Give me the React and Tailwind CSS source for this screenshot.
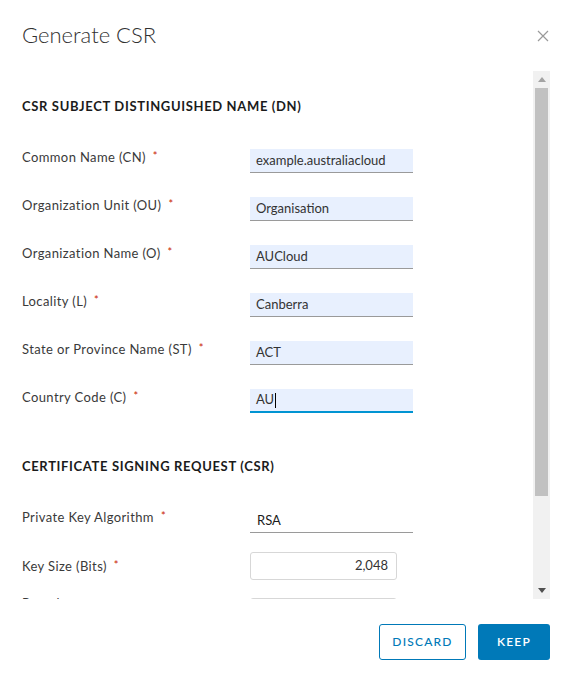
import React from "react";

const font = { fontFamily: "Lato, 'Liberation Sans', Arial, sans-serif" };

function Req() {
  return <span className="ml-[7px] text-[11px] text-[#c92100] relative top-[-2px]">*</span>;
}

function Label({ children, req = true, extra = "" }) {
  return (
    <div className={"w-[228px] text-[13px] leading-[16px] tracking-[0.03em] text-[#3a3a3a] " + extra}>
      {children}
      {req && <Req />}
    </div>
  );
}

function TextRow({ label, value, focused }) {
  return (
    <div className="flex items-start h-[24px]">
      <Label>{label}</Label>
      <div
        className={
          "w-[163px] h-[24px] bg-[#e8f0fe] pl-[6px] flex items-center text-[13px] text-[#333] " +
          (focused ? "border-b-2 border-[#0094d2]" : "border-b border-[#9a9a9a]")
        }
      >
        {value}
        {focused && <span className="inline-block w-px h-[15px] bg-black ml-px" />}
      </div>
    </div>
  );
}

export default function App() {
  return (
    <div className="w-[573px] h-[682px] bg-white flex flex-col overflow-hidden" style={font}>
      <div className="flex items-start justify-between pl-[22px] pr-[24px] pt-[21px] h-[71px]">
        <div className="text-[22px] leading-[28px] font-light text-[#313131]">Generate CSR</div>
        <svg width="12" height="12" viewBox="0 0 12 12" className="mt-[9px]">
          <path d="M1 1L11 11M11 1L1 11" stroke="#9a9a9a" strokeWidth="1.2" />
        </svg>
      </div>

      <div className="flex h-[528px] pr-[23px]">
        <div className="w-[533px] overflow-hidden pl-[22px]">
          <div className="pt-[27px] text-[13px] leading-[16px] font-bold tracking-[0.05em] text-[#1b1b1b]">
            CSR SUBJECT DISTINGUISHED NAME (DN)
          </div>
          <div className="mt-[35px] flex flex-col gap-[24px]">
            <TextRow label="Common Name (CN)" value="example.australiacloud" />
            <TextRow label="Organization Unit (OU)" value="Organisation" />
            <TextRow label="Organization Name (O)" value="AUCloud" />
            <TextRow label="Locality (L)" value="Canberra" />
            <TextRow label="State or Province Name (ST)" value="ACT" />
            <TextRow label="Country Code (C)" value="AU" focused />
          </div>
          <div className="mt-[45px] text-[13px] leading-[16px] font-bold tracking-[0.05em] text-[#1b1b1b]">
            CERTIFICATE SIGNING REQUEST (CSR)
          </div>
          <div className="mt-[35px] flex items-start h-[24px]">
            <Label>Private Key Algorithm</Label>
            <div className="w-[163px] h-[24px] pl-[7px] flex items-center border-b border-[#9a9a9a] text-[13px] text-[#1b1b1b]">
              RSA
            </div>
          </div>
          <div className="mt-[19px] flex items-center h-[28px]">
            <Label>Key Size (Bits)</Label>
            <div className="w-[147px] h-[28px] border border-[#d7d7d7] rounded-[3px] pr-[8px] flex items-center justify-end text-[13px] text-[#333]">
              2,048
            </div>
          </div>
          <div className="mt-[18px] flex items-start h-[28px]">
            <Label req={false} extra="relative top-[-3px]">Passphrase</Label>
            <div className="w-[147px] h-[28px] border border-[#d7d7d7] rounded-[3px]" />
          </div>
        </div>
        <div className="w-[17px] h-full bg-[#f1f1f1] flex flex-col items-center">
          <div className="h-[17px] flex items-center justify-center">
            <svg width="8" height="5" viewBox="0 0 8 5">
              <path d="M0 5L4 0L8 5Z" fill="#a3a3a3" />
            </svg>
          </div>
          <div className="w-[13px] h-[408px] bg-[#c1c1c1]" />
          <div className="flex-1" />
          <div className="h-[17px] flex items-center justify-center">
            <svg width="8" height="5" viewBox="0 0 8 5">
              <path d="M0 0L8 0L4 5Z" fill="#505050" />
            </svg>
          </div>
        </div>
      </div>

      <div className="flex justify-end gap-[12px] pr-[23px] pt-[25px]">
        <button className="w-[87px] h-[36px] border border-[#0079b8] rounded-[3px] text-[#0079b8] text-[12px] font-medium tracking-[0.1em]">
          DISCARD
        </button>
        <button className="w-[72px] h-[36px] bg-[#0079b8] rounded-[3px] text-white text-[12px] font-semibold tracking-[0.1em]">
          KEEP
        </button>
      </div>
    </div>
  );
}
